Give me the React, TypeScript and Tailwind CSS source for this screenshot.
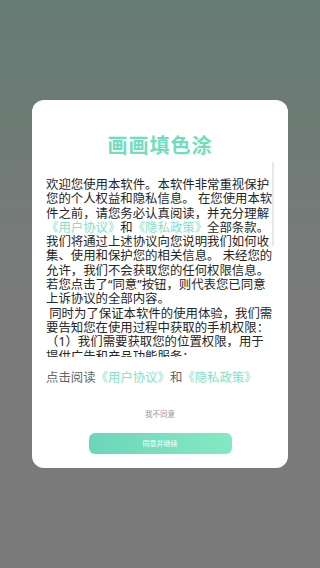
import React from "react";

const lines: React.ReactNode[] = [
  "欢迎您使用本软件。本软件非常重视保护",
  "您的个人权益和隐私信息。 在您使用本软",
  "件之前，请您务必认真阅读，并充分理解",
  <>
    <span className="text-[#85e2c8]">《用户协议》</span>和<span className="text-[#85e2c8]">《隐私政策》</span>全部条款。
  </>,
  "我们将通过上述协议向您说明我们如何收",
  "集、使用和保护您的相关信息。 未经您的",
  "允许，我们不会获取您的任何权限信息。",
  "若您点击了“同意”按钮，则代表您已同意",
  "上诉协议的全部内容。",
  " 同时为了保证本软件的使用体验，我们需",
  "要告知您在使用过程中获取的手机权限：",
  "（1）我们需要获取您的位置权限，用于",
  "提供广告和产品功能服务；",
];

export default function App() {
  return (
    <div
      className="w-[320px] h-[568px] flex items-center justify-center bg-[linear-gradient(180deg,#667c74_0%,#6f7b76_25%,#787a79_45%,#7a7a7a_60%,#7a7a7a_100%)]"
      style={{ fontFamily: '"Noto Sans", "Noto Sans CJK SC", sans-serif' }}
    >
      <div className="w-[256px] h-[368px] bg-white rounded-[12px] flex flex-col">
        <div
          className="mt-[33px] h-[24px] flex items-center justify-center text-[20px] font-bold text-[#6fdebe] tracking-[1px] leading-[24px]"
          style={{ fontFamily: '"Noto Sans CJK SC", sans-serif' }}
        >
          画画填色涂
        </div>
        <div className="relative mt-[5px] ml-[14px] mr-[12px] h-[195px] overflow-hidden pt-[16px]">
          <div className="text-[12.4px] leading-[14.3px] text-[#262626]">
            {lines.map((l, i) => (
              <div key={i} className="whitespace-pre">
                {l}
              </div>
            ))}
          </div>
          <div className="absolute right-[2px] top-0 w-[2px] h-[84px] bg-[#e8e8e8]" />
        </div>
        <div className="ml-[14px] mt-[14px] text-[12.4px] leading-[14.3px] text-[#666] whitespace-pre">
          点击阅读<span className="text-[#85e2c8]">《用户协议》</span>和<span className="text-[#85e2c8]">《隐私政策》</span>
        </div>
        <div className="mt-[24px] text-center text-[7.5px] leading-[10px] text-[#999]">
          我不同意
        </div>
        <div className="mt-[14px] mx-auto w-[143px] h-[21px] rounded-[6px] bg-[linear-gradient(90deg,#6dd6ba,#84e9c3)] flex items-center justify-center text-white text-[7px] leading-[10px]">
          同意并继续
        </div>
      </div>
    </div>
  );
}
